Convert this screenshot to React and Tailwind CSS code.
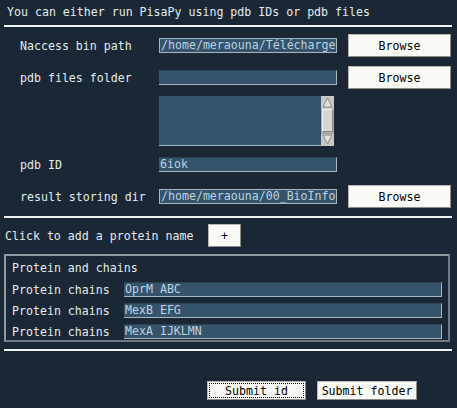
import React from "react";

const mono = { fontFamily: '"DejaVu Sans Mono", "Liberation Mono", monospace' };

function Field({ value, full, w = "w-[178px]" }) {
  return (
    <div
      className={`${w} h-[15px] shrink-0 bg-[#35536a] text-[#bcd2e2] leading-[13px] pl-[1px] overflow-hidden whitespace-nowrap border-r border-b border-[#a7b6c0] ${
        full ? "border-t border-l" : "border-t border-t-[#2a4355]"
      }`}
    >
      {value}
    </div>
  );
}

function Button({ label, w = "w-[103px]", h = "h-[23px]", focus }) {
  return (
    <div
      className={`${w} ${h} shrink-0 bg-[#fafaf6] text-black border border-[#b8b8b2] border-r-[#8c8c88] border-b-[#8c8c88] flex items-center justify-center ${
        focus ? "p-[1px]" : "p-[2px]"
      }`}
    >
      <div
        className={`w-full h-full flex items-center justify-center leading-[12px] ${
          focus ? "border border-dotted border-black" : ""
        }`}
      >
        {label}
      </div>
    </div>
  );
}

function Row({ label, children, button, mt }) {
  return (
    <div className={`flex items-center h-[23px] ${mt}`}>
      <div className="w-[159px] pl-[20px] shrink-0 whitespace-nowrap">{label}</div>
      {children}
      {button && <div className="ml-[11px]">{button}</div>}
    </div>
  );
}

function Hr({ mt }) {
  return <div className={`ml-[4px] w-[448px] h-[2px] bg-[#eef2f2] ${mt}`} />;
}

function Scrollbar() {
  return (
    <div className="w-[13px] h-[50px] bg-[#a8a8a4] flex flex-col items-center">
      <svg width="13" height="13" viewBox="0 0 13 13">
        <rect x="0" y="0" width="13" height="13" fill="#c8c8c4" />
        <polygon points="6.5,2 11,11 2,11" fill="#e4e4e0" stroke="#8a8a86" strokeWidth="1" />
      </svg>
      <div className="w-[11px] h-[23px] bg-[#d6d6d2] border border-[#f2f2ee] border-r-[#8a8a86] border-b-[#8a8a86]" />
      <div className="flex-1" />
      <svg width="13" height="12" viewBox="0 0 13 12">
        <rect x="0" y="0" width="13" height="12" fill="#c8c8c4" />
        <polygon points="2,1 11,1 6.5,10" fill="#e4e4e0" stroke="#8a8a86" strokeWidth="1" />
      </svg>
    </div>
  );
}

export default function App() {
  const chains = ["OprM ABC", "MexB EFG", "MexA IJKLMN"];

  return (
    <div
      className="w-[457px] h-[408px] bg-[#1b2735] text-[#e2ecef] text-[11.6px] leading-[14px] overflow-hidden"
      style={mono}
    >
      <div className="pl-[7px] pt-[5px] h-[25px]">
        You can either run PisaPy using pdb IDs or pdb files
      </div>
      <Hr />

      <Row label="Naccess bin path" mt="mt-[7px]" button={<Button label="Browse" />}>
        <Field value="/home/meraouna/Télécharge" full />
      </Row>
      <Row label="pdb files folder" mt="mt-[9px]" button={<Button label="Browse" />}>
        <Field value="" />
      </Row>

      <div className="flex mt-[7px] pl-[159px]">
        <div className="w-[162px] h-[50px] bg-[#35536a] border-b border-[#a7b6c0]" />
        <Scrollbar />
      </div>

      <Row label="pdb ID" mt="mt-[7px]">
        <Field value="6iok" />
      </Row>
      <Row label="result storing dir" mt="mt-[9px]" button={<Button label="Browse" />}>
        <Field value="/home/meraouna/00_BioInfo" full />
      </Row>

      <Hr mt="mt-[8px]" />

      <div className="flex items-center h-[23px] mt-[6px]">
        <div className="w-[208px] pl-[5px]">Click to add a protein name</div>
        <Button label="+" w="w-[33px]" />
      </div>

      <div className="ml-[4px] mt-[7px] w-[446px] h-[88px] border-2 border-[#8d9aa0] border-r-[#6e7a80] border-b-[#6e7a80] pl-[6px] pt-[5px]">
        <div className="h-[20px]">Protein and chains</div>
        <div className="flex flex-col gap-[6px] mt-[1px]">
          {chains.map((c) => (
            <div key={c} className="flex items-center h-[15px]">
              <div className="w-[112px] shrink-0">Protein chains</div>
              <Field value={c} w="w-[318px]" />
            </div>
          ))}
        </div>
      </div>

      <Hr mt="mt-[7px]" />

      <div className="flex mt-[30px] pl-[207px] gap-[11px]">
        <Button label="Submit id" w="w-[99px]" h="h-[19px]" focus />
        <Button label="Submit folder" w="w-[100px]" h="h-[19px]" />
      </div>
    </div>
  );
}
